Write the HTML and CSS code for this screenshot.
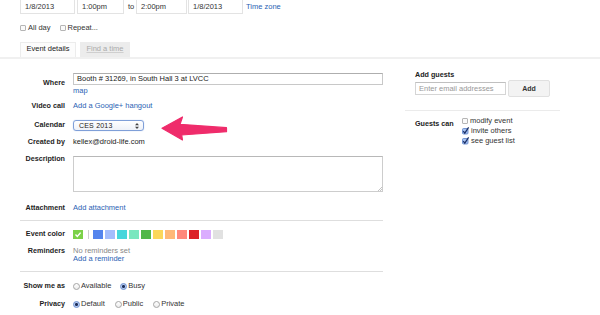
FILE: index.html
```html
<!DOCTYPE html>
<html>
<head>
<meta charset="utf-8">
<link rel="stylesheet" href="styles.css">
</head>
<body>
<div class="topbar">
  <div class="tbox w1">1/8/2013</div>
  <div class="tbox w2">1:00pm</div>
  <span class="to">to</span>
  <div class="tbox w3">2:00pm</div>
  <div class="tbox w4">1/8/2013</div>
  <a class="link tz">Time zone</a>
</div>
<div class="checkrow">
  <span class="cb"></span><span class="cbl">All day</span>
  <span class="cb cb-gap"></span><span class="cbl">Repeat...</span>
</div>
<div class="tabs">
  <div class="tab active">Event details</div>
  <div class="tab inactive">Find a time</div>
</div>
<div class="band"></div>

<div class="main">
  <div class="left">
    <div class="row r-where">
      <div class="lbl lbl-where">Where</div>
      <div>
        <div class="inp">Booth # 31269, in South Hall 3 at LVCC</div>
        <a class="link map">map</a>
      </div>
    </div>
    <div class="row r-video">
      <div class="lbl">Video call</div>
      <a class="link">Add a Google+ hangout</a>
    </div>
    <div class="row r-cal">
      <div class="lbl lbl-cal">Calendar</div>
      <div class="select"><span>CES 2013</span>
        <svg class="updown" width="4" height="6" viewBox="0 0 4 6"><path d="M2 0 L4 2.3 H0 Z M2 6 L4 3.7 H0 Z" fill="#444"/></svg>
      </div>
    </div>
    <div class="row r-created">
      <div class="lbl">Created by</div>
      <div>kellex@droid-life.com</div>
    </div>
    <div class="row r-desc">
      <div class="lbl">Description</div>
      <div class="textarea">
        <svg width="5" height="5" viewBox="0 0 5 5"><path d="M1 5 L5 1 M3 5 L5 3" stroke="#aaa" stroke-width="0.7"/></svg>
      </div>
    </div>
    <div class="row r-attach">
      <div class="lbl">Attachment</div>
      <a class="link">Add attachment</a>
    </div>
    <div class="sep sep1"></div>
    <div class="row r-color">
      <div class="lbl">Event color</div>
      <div class="swatches">
        <span class="sw sw-sel"><svg width="10" height="9" viewBox="0 0 10 9"><path d="M2.5 4.6 L4.3 6.4 L7.6 2.6" stroke="#fff" stroke-width="1.4" fill="none"/></svg></span>
        <span class="divider"></span>
        <span class="sw c1"></span><span class="sw c2"></span><span class="sw c3"></span><span class="sw c4"></span><span class="sw c5"></span><span class="sw c6"></span><span class="sw c7"></span><span class="sw c8"></span><span class="sw c9"></span><span class="sw c10"></span><span class="sw c11"></span>
      </div>
    </div>
    <div class="row r-rem">
      <div class="lbl">Reminders</div>
      <div>
        <div class="muted">No reminders set</div>
        <a class="link">Add a reminder</a>
      </div>
    </div>
    <div class="sep sep2"></div>
    <div class="row r-show">
      <div class="lbl">Show me as</div>
      <div class="radios">
        <span class="rd"></span><span class="rdl">Available</span>
        <span class="rd on g1"></span><span class="rdl">Busy</span>
      </div>
    </div>
    <div class="row r-priv">
      <div class="lbl">Privacy</div>
      <div class="radios">
        <span class="rd on"></span><span class="rdl">Default</span>
        <span class="rd g2"></span><span class="rdl">Public</span>
        <span class="rd g3"></span><span class="rdl">Private</span>
      </div>
    </div>
  </div>

  <div class="right">
    <div class="rtitle">Add guests</div>
    <div class="addrow">
      <div class="email">Enter email addresses</div>
      <div class="btn">Add</div>
    </div>
    <div class="rsep"></div>
    <div class="guests">
      <div class="glbl">Guests can</div>
      <div class="gopts">
        <div class="gopt"><span class="cb"></span><span>modify event</span></div>
        <div class="gopt"><svg class="cbx" width="7" height="8" viewBox="0 0 7 8"><rect x="0.5" y="1.5" width="5.5" height="5.5" rx="1" fill="#a8c2f0" stroke="#5a82c8" stroke-width="0.8"/><path d="M1.3 4.2 L2.8 6.2 L6.6 0.4" stroke="#1b2f66" stroke-width="1.2" fill="none"/></svg><span>invite others</span></div>
        <div class="gopt"><svg class="cbx" width="7" height="8" viewBox="0 0 7 8"><rect x="0.5" y="1.5" width="5.5" height="5.5" rx="1" fill="#a8c2f0" stroke="#5a82c8" stroke-width="0.8"/><path d="M1.3 4.2 L2.8 6.2 L6.6 0.4" stroke="#1b2f66" stroke-width="1.2" fill="none"/></svg><span>see guest list</span></div>
      </div>
    </div>
  </div>
</div>

<svg class="arrow" width="70" height="32" viewBox="0 0 70 32">
  <path d="M2 16.3 L22.5 5 L20 12.3 L66.5 15.7 L66.5 19.7 L21.7 23 L22.5 28 Z" fill="#ef2c6b" stroke="#ef2c6b" stroke-width="1.2" stroke-linejoin="round"/>
</svg>
</body>
</html>
```
FILE: styles.css
```css
* { box-sizing: border-box; }
html, body { margin: 0; padding: 0; }
body {
  width: 600px;
  height: 315px;
  overflow: hidden;
  background: #fff;
  font-family: "Liberation Sans", Arial, sans-serif;
  font-size: 7.5px;
  line-height: 8px;
  color: #222;
  position: relative;
}
.link { color: #2b5fb4; text-decoration: none; }

/* top row */
.topbar {
  display: flex;
  align-items: flex-start;
  margin-top: -2px;
  padding-left: 20px;
}
.tbox {
  height: 16px;
  border: 1px solid #e3e3e3;
  padding: 4px 3px 0 4px;
  color: #333;
}
.w1 { width: 55px; }
.w2 { width: 47px; margin-left: 2px; }
.w3 { width: 51px; }
.w4 { width: 55px; margin-left: 1px; }
.to { padding-top: 5px; margin: 0 1px 0 4px; width: 7px; color: #333; }
.tz { padding-top: 5px; margin-left: 3px; }

.checkrow {
  display: flex;
  align-items: center;
  margin-top: 10px;
  padding-left: 20px;
  height: 8px;
  color: #333;
}
.cb {
  display: inline-block;
  width: 6px;
  height: 6px;
  border: 1px solid #b5b5b5;
  border-radius: 1px;
  background: #fafafa;
  flex: none;
}
.cbl { margin-left: 2px; }
.cb-gap { margin-left: 9px; }

.tabs {
  display: flex;
  margin-top: 10px;
  padding-left: 20px;
  height: 15px;
}
.tab {
  height: 15px;
  padding: 3px 0 0;
  white-space: nowrap;
  text-align: center;
}
.tab.active {
  width: 56px;
  border: 1px solid #ececec;
  border-bottom: none;
  background: #fcfcfc;
  color: #222;
  padding-top: 2px;
}
.tab.inactive {
  width: 50px;
  margin-left: 4px;
  background: #ececec;
  color: #aaa;
  text-decoration: underline;
  text-decoration-color: #cfcfcf;
}
.band { height: 2px; background: #f0f0f0; }

/* main */
.main { display: flex; align-items: flex-start; }
.left { width: 383px; padding-left: 20px; }
.right { width: 155px; margin-left: 22px; }

.row {
  display: grid;
  grid-template-columns: 45px 1fr;
  column-gap: 8px;
  align-items: start;
}
.lbl {
  text-align: right;
  font-weight: bold;
  font-size: 7.2px;
  color: #1e1e1e;
  white-space: nowrap;
}
.r-where { margin-top: 14px; }
.lbl-where { padding-top: 6px; }
.inp {
  height: 12px;
  border: 1px solid #c8c8c8;
  border-top-color: #aeaeae;
  padding: 0 3px;
  line-height: 9px;
  color: #222;
}
.map { display: block; margin-top: 2px; }
.r-video { margin-top: 7px; }
.r-cal { margin-top: 10px; }
.lbl-cal { padding-top: 1px; }
.select {
  width: 71px;
  height: 11px;
  border: 1px solid #7f9fd8;
  border-radius: 3px;
  background: linear-gradient(#ffffff, #eef1f8);
  box-shadow: 0 0 1px #9cb6e6;
  display: flex;
  justify-content: space-between;
  align-items: center;
  padding: 0 4px 0 5px;
  font-size: 7px;
  letter-spacing: 0.2px;
  color: #222;
}
.r-created { margin-top: 7px; }
.r-desc { margin-top: 9px; }
.textarea {
  margin-top: 1px;
  height: 36px;
  border: 1px solid #cdcdcd;
  border-top-color: #b8b8b8;
  display: flex;
  justify-content: flex-end;
  align-items: flex-end;
}
.r-attach { margin-top: 12px; }
.sep { height: 1px; background: #dedede; }
.sep1 { margin-top: 8px; }
.r-color { margin-top: 9px; }
.swatches { display: flex; align-items: center; height: 9px; }
.sw { width: 10px; height: 9px; flex: none; margin-right: 2px; display: block; }
.sw-sel { background: #7bd148; margin-left: 0; margin-right: 0; }
.sw-sel svg { display: block; }
.divider { width: 1px; height: 9px; background: #cfcfcf; margin: 0 4px 0 5px; }
.c1 { background: #5484ed; }
.c2 { background: #a4bdfc; }
.c3 { background: #46d6db; }
.c4 { background: #7ae7bf; }
.c5 { background: #51b749; }
.c6 { background: #fbd75b; }
.c7 { background: #ffb878; }
.c8 { background: #ff887c; }
.c9 { background: #dc2127; }
.c10 { background: #dbadff; }
.c11 { background: #e1e1e1; }
.r-rem { margin-top: 8px; }
.muted { color: #888; }
.sep2 { margin-top: 8px; }
.r-show { margin-top: 10px; }
.r-priv { margin-top: 10px; }
.radios { display: flex; align-items: center; height: 8px; color: #333; }
.rd {
  display: inline-block;
  width: 7px;
  height: 7px;
  border-radius: 50%;
  border: 1px solid #a5a5a5;
  background: linear-gradient(#fff, #ececec);
  flex: none;
}
.rd.on {
  border-color: #6d8fd0;
  background: radial-gradient(circle, #1d2d58 0, #1d2d58 1.3px, #b4cbf2 1.6px);
}
.rdl { margin-left: 1px; }
.g1 { margin-left: 9px; }
.g2 { margin-left: 10px; }
.g3 { margin-left: 10px; }

/* right */
.rtitle {
  margin-top: 12px;
  padding-left: 10px;
  font-weight: bold;
  font-size: 7.2px;
}
.addrow {
  margin-top: 1px;
  padding-left: 10px;
  display: flex;
  align-items: center;
  height: 17px;
}
.email {
  width: 91px;
  height: 13px;
  border: 1px solid #d5d5d5;
  border-top-color: #c0c0c0;
  color: #999;
  padding: 2px 0 0 3px;
}
.btn {
  width: 42px;
  height: 17px;
  margin-left: 2px;
  border: 1px solid #e0e0e0;
  border-radius: 2px;
  background: #f3f3f3;
  font-weight: bold;
  font-size: 7px;
  color: #333;
  display: flex;
  align-items: center;
  justify-content: center;
}
.rsep { margin-top: 13px; height: 1px; background: #ebebeb; }
.guests {
  display: flex;
  margin-top: 5px;
  padding-left: 10px;
}
.glbl {
  width: 47px;
  padding-top: 3px;
  font-weight: bold;
  font-size: 7.2px;
  line-height: 10px;
}
.gopts { display: flex; flex-direction: column; color: #333; }
.gopt { display: flex; align-items: center; height: 10px; }
.gopt span:last-child { margin-left: 2px; }
.cbx { display: block; flex: none; margin-top: -1px; overflow: visible; }

.arrow { position: absolute; left: 160px; top: 112px; }
```
